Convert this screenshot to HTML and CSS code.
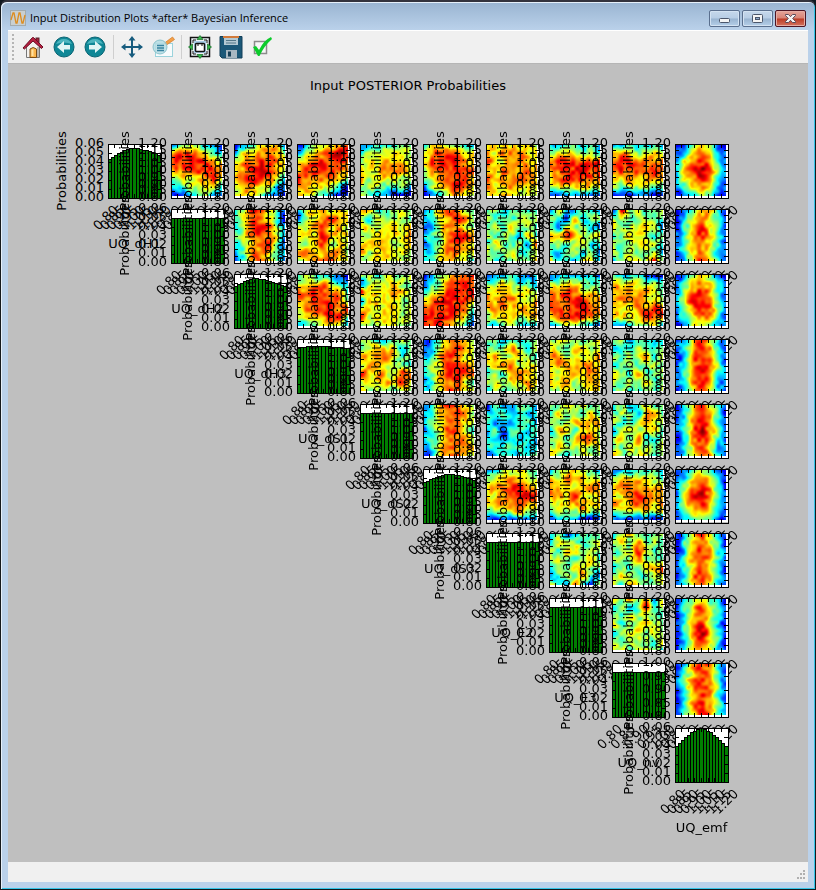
FILE: index.html
```html
<!DOCTYPE html>
<html lang="en">
<head>
    <meta charset="UTF-8">
    <meta name="viewport" content="width=device-width, initial-scale=1.0">
    <title>Input Distribution Plots *after* Bayesian Inference</title>
    <link rel="stylesheet" href="styles.css">
</head>
<body>
    <div class="window">
        <header class="titlebar">
            <svg class="app-icon" width="16" height="16" viewBox="0 0 16 16">
                <rect x="0.5" y="0.5" width="15" height="15" fill="#c9cfd0" stroke="#a3abae"/>
                <path d="M1 10 L3 3 L4 3 L6 13 L7 13 L9 3 L10 3 L12 13 L13 13 L15 5" fill="none" stroke="#dd8d20" stroke-width="1.3"/>
            </svg>
            <h1>Input Distribution Plots *after* Bayesian Inference</h1>
            <div class="window-buttons">
                <button class="win-button" aria-label="Minimize">
                    <svg width="29" height="15" viewBox="0 0 29 15">
                        <rect x="9.5" y="7.5" width="10" height="4" rx="1" fill="#f4f4f4" stroke="#4b566b"/>
                    </svg>
                </button>
                <button class="win-button" aria-label="Maximize">
                    <svg width="29" height="15" viewBox="0 0 29 15">
                        <rect x="9.5" y="3.5" width="10" height="8" rx="1" fill="#f4f4f4" stroke="#4b566b"/>
                        <rect x="12.5" y="6.5" width="4" height="2" fill="#8fa9cb" stroke="#4b566b"/>
                    </svg>
                </button>
                <button class="win-button close" aria-label="Close">
                    <svg width="29" height="15" viewBox="0 0 29 15">
                        <path d="M9.5 3.5 H12.5 L14.5 5.7 L16.5 3.5 H19.5 V4.5 L16.7 7.5 L19.5 10.5 V11.5 H16.5 L14.5 9.3 L12.5 11.5 H9.5 V10.5 L12.3 7.5 L9.5 4.5 Z" fill="#f6f4f4" stroke="#5a4a58"/>
                    </svg>
                </button>
            </div>
        </header>

        <main class="content">
            <div class="toolbar" role="toolbar">
                <span class="handle"></span>
                <button class="tool" aria-label="Home">
                    <svg width="24" height="24" viewBox="0 0 24 24">
                        <rect x="15" y="3" width="3" height="6" fill="#a31c37" stroke="#55222b"/>
                        <path d="M5.5 11 L12 4 L18.5 11 V22.5 H5.5 Z" fill="#f3f1ee" stroke="#777"/>
                        <path d="M17 12 V22" stroke="#b9b5ae" stroke-width="2"/>
                        <path d="M9 22.5 V14 Q12 11 15.5 14 V22.5 Z" fill="#fbb54c" stroke="#7a4c14"/>
                        <path d="M10.5 21 V15 Q11.5 14 12.5 14.5 V21 Z" fill="#fee0a0"/>
                        <path d="M2 13 L11.5 2.5 L12.5 2.5 L22 12 L20.5 13.5 L12 6 L3.5 14 Z" fill="#b61e40" stroke="#6b1025"/>
                    </svg>
                </button>
                <button class="tool" aria-label="Back">
                    <svg width="24" height="24" viewBox="0 0 24 24">
                        <circle cx="12" cy="12" r="10" fill="#0f8796" stroke="#0b6574"/>
                        <path d="M4 9 A9 9 0 0 1 20 9 Q12 6 4 9" fill="#4db5bf"/>
                        <path d="M5 12 L12 6 V10 H18 V14.5 H12 V18 Z" fill="#e0f5f5"/>
                    </svg>
                </button>
                <button class="tool" aria-label="Forward">
                    <svg width="24" height="24" viewBox="0 0 24 24">
                        <circle cx="12" cy="12" r="10" fill="#0f8796" stroke="#0b6574"/>
                        <path d="M4 9 A9 9 0 0 1 20 9 Q12 6 4 9" fill="#4db5bf"/>
                        <path d="M19 12 L12 6 V10 H6 V14.5 H12 V18 Z" fill="#e0f5f5"/>
                    </svg>
                </button>
                <span class="separator"></span>
                <button class="tool" aria-label="Pan">
                    <svg width="24" height="24" viewBox="0 0 24 24">
                        <path d="M12 3 V21 M3 12 H21" stroke="#175c7e" stroke-width="2"/>
                        <path d="M12 1 L15.5 5.5 H8.5 Z M12 23 L15.5 18.5 H8.5 Z M1 12 L5.5 8.5 V15.5 Z M23 12 L18.5 8.5 V15.5 Z" fill="#175c7e"/>
                    </svg>
                </button>
                <button class="tool" aria-label="Zoom to rectangle">
                    <svg width="24" height="24" viewBox="0 0 24 24">
                        <rect x="4.5" y="8.5" width="17" height="13" fill="#f7fbfc" stroke="#9bd3dc"/>
                        <path d="M13.5 8 L21.5 2 L23.5 4.5 L15.5 10 Z" fill="#f5a048" stroke="#cf7c2c" stroke-width="0.7"/>
                        <circle cx="9" cy="12" r="7" fill="#b5dce3" fill-opacity="0.85" stroke="#8ac3cd"/>
                        <path d="M6 10.5 H13 M6 13 H13 M6 15.5 H13" stroke="#3683a0" stroke-width="1.3"/>
                    </svg>
                </button>
                <span class="separator"></span>
                <button class="tool" aria-label="Configure subplots">
                    <svg width="24" height="24" viewBox="0 0 24 24">
                        <rect x="2.5" y="2.5" width="19" height="19" fill="#edf3f7" stroke="#111" stroke-width="1.5"/>
                        <path d="M5 5 H8 M16 5 H19 M5 19 H8 M16 19 H19 M5 5 V8 M19 5 V8 M5 16 V19 M19 16 V19" stroke="#111"/>
                        <rect x="6" y="6" width="12" height="12" fill="#a9cbe6"/>
                        <rect x="7.5" y="8.5" width="9" height="8" rx="1" fill="#fff" stroke="#111" stroke-width="1.5"/>
                        <path d="M10 8.5 V11 M14 8.5 V11" stroke="#111"/>
                        <path d="M12 0.5 L15 4.5 H9 Z M12 23.5 L15 19.5 H9 Z M0.5 12 L4.5 9 V15 Z M23.5 12 L19.5 9 V15 Z" fill="#37b34a" stroke="#126b22" stroke-width="0.7"/>
                    </svg>
                </button>
                <button class="tool" aria-label="Save">
                    <svg width="24" height="24" viewBox="0 0 24 24">
                        <path d="M1 1.5 H23 V23 H3 L1 21 Z" fill="#1b5878" stroke="#123f58"/>
                        <rect x="5" y="1" width="14" height="9" fill="#b3c9d3"/>
                        <rect x="4" y="1" width="16" height="2" fill="#d17a3a"/>
                        <path d="M7 5.5 H17 M7 8 H17" stroke="#537788"/>
                        <rect x="7" y="15" width="11" height="8" fill="#a9b8c2"/>
                        <rect x="9" y="16.5" width="3" height="5" fill="#163f57"/>
                    </svg>
                </button>
                <button class="tool" aria-label="Edit curves and axes">
                    <svg width="24" height="24" viewBox="0 0 24 24">
                        <rect x="4.5" y="6.5" width="12" height="12" fill="#f7f7f7" stroke="#8b8b8b" stroke-width="1.5"/>
                        <path d="M3 12 L6 11 L9 15 Q14 5 21 2 L22 4 Q14 11 9.5 21 L8 21 Z" fill="#0ccb2c"/>
                    </svg>
                </button>
            </div>

            <figure class="figure">
                <figcaption>Input POSTERIOR Probabilities</figcaption>
                <div class="plots" id="plots"></div>
            </figure>

            <footer class="statusbar">
                <svg width="10" height="10" viewBox="0 0 10 10">
                    <path d="M7 1h2M4 4h2M7 4h2M1 8h2M4 8h2M7 8h2" stroke="#b0b0b0" stroke-width="2"/>
                </svg>
            </footer>
        </main>
    </div>

    <script src="plots.js"></script>
</body>
</html>
```
FILE: styles.css
```css
:root {
    --frame-color: #bad1ea;
    --chrome-bg: #f0f0f0;
    --figure-bg: #bfbfbf;
}

* {
    box-sizing: border-box;
}

body {
    margin: 0;
    background-color: #101820;
    font-family: "Noto Sans", "Open Sans", sans-serif;
}

.window {
    display: flex;
    flex-direction: column;
    min-height: 100vh;
    padding: 0 6px 7px;
    border: 1px solid #15191d;
    border-top: 2px solid #33333d;
    border-radius: 7px 7px 0 0;
    background: linear-gradient(#99b4d1, var(--frame-color) 28px);
    box-shadow: inset 1px 1px 0 #e6f0fa, inset -1px -1px 0 #35c5e8;
}

.titlebar {
    display: flex;
    align-items: center;
    height: 28px;
    padding: 4px 0 0 3px;
}

.titlebar h1 {
    flex: 1;
    margin: 0 0 0 4px;
    font-family: "Open Sans", sans-serif;
    font-size: 11px;
    font-weight: 400;
    line-height: 16px;
    color: #000;
}

.window-buttons {
    display: flex;
    gap: 2px;
    margin-right: 3px;
}

.win-button {
    width: 31px;
    height: 17px;
    padding: 0;
    border: 1px solid #5a6f8e;
    border-radius: 2px;
    background: linear-gradient(#c6d8eb, #b7cde5 48%, #98b3d0 52%, #b5cfe9);
    box-shadow: inset 0 0 0 1px #d3e2f2;
}

.win-button svg {
    display: block;
}

.win-button.close {
    border-color: #4d1524;
    background: linear-gradient(#e5a499, #d88375 48%, #bb3a24 52%, #d4735f);
    box-shadow: inset 0 0 0 1px #e5aca3;
}

.content {
    display: flex;
    flex: 1;
    flex-direction: column;
    margin: 0 1px;
    background-color: var(--chrome-bg);
}

.toolbar {
    display: flex;
    align-items: center;
    height: 34px;
    padding-left: 4px;
    border-top: 1px solid #fff;
    border-bottom: 1px solid #b5b5b5;
}

.handle {
    width: 2px;
    height: 27px;
    margin-right: 3px;
    background: repeating-linear-gradient(#b5b5b5 0 2px, transparent 2px 4px);
}

.tool {
    display: flex;
    align-items: center;
    justify-content: center;
    width: 31px;
    height: 30px;
    padding: 0;
    border: none;
    background: none;
}

.separator {
    width: 1px;
    height: 24px;
    margin: 0 2px 0 3px;
    background-color: #cfcfcf;
}

.figure {
    display: flex;
    flex: 1;
    flex-direction: column;
    margin: 0;
    padding: 0 80px 80px 100px;
    background-color: var(--figure-bg);
    font-family: "DejaVu Sans", sans-serif;
    font-size: 13px;
    color: #000;
}

.figure figcaption {
    height: 80px;
    margin-left: -20px;
    padding-top: 13px;
    line-height: 18px;
    text-align: center;
}

.plots {
    display: grid;
    flex: 1;
    grid-template-columns: repeat(10, 1fr);
    grid-template-rows: repeat(10, minmax(40px, 1fr));
    gap: 11px 10px;
}

.plot {
    display: grid;
    grid-template: 100% / 100%;
    contain: size;
    background-color: #fff;
}

.plot canvas,
.plot svg {
    grid-area: 1 / 1;
    width: 100%;
    height: 100%;
}

.plot canvas {
    padding: 1px 2px 2px 1px;
}

.plot svg {
    overflow: visible;
}

.plot text {
    fill: #000;
}

.bar {
    fill: #007f00;
    stroke: #000;
    stroke-width: 1px;
    shape-rendering: crispEdges;
}

.axis {
    fill: none;
    stroke: #000;
    stroke-width: 1px;
    shape-rendering: crispEdges;
}

.statusbar {
    display: flex;
    align-items: flex-end;
    justify-content: flex-end;
    height: 20px;
    padding: 0 2px 2px;
}
```
FILE: plots.js
```js
const SVG_NS = 'http://www.w3.org/2000/svg';

const inputs = ['UQ_dH1', 'UQ_dH2', 'UQ_dH3', 'UQ_dS1', 'UQ_dS2', 'UQ_dS3', 'UQ_E2', 'UQ_E3', 'UQ_nv', 'UQ_emf'];

const fullRange = ['0.80', '0.85', '0.90', '0.95', '1.00', '1.05', '1.10', '1.15', '1.20'];
const shortRange = ['0.80', '0.85', '0.90', '0.95', '1.00'];
const probabilityTicks = ['0.00', '0.01', '0.02', '0.03', '0.04', '0.05', '0.06'];

// first bar, peak, last bar, position of the peak
const marginals = [
    [0.042, 0.055, 0.047, 0.5],
    [0.050, 0.050, 0.050, 0.5],
    [0.045, 0.055, 0.045, 0.4],
    [0.050, 0.052, 0.049, 0.4],
    [0.049, 0.050, 0.050, 0.5],
    [0.044, 0.054, 0.047, 0.5],
    [0.049, 0.050, 0.050, 0.5],
    [0.050, 0.050, 0.050, 0.5],
    [0.050, 0.050, 0.050, 0.5],
    [0.038, 0.059, 0.038, 0.5]
];

// joint densities, row by row, 0 = lowest and 9 = highest
const joints = [
    [
        '3455331 7887643 8888876 7788887 5666786 3455664 1134532',
        '1346663 3667775 5778876 6789875 6888763 5776632 5665321',
        '1355678 3567898 6788888 7888877 8777765 7766531 6654311',
        '2344454 4556665 5667665 6667776 7566655 5554453 5433111',
        '4665543 5788766 6888876 5788887 4678887 2567876 1246765',
        '6666665 7677766 8667776 7677777 8677776 7667666 6666555',
        '3344343 5666554 7888888 7788988 6788877 5666665 2223222',
        '3343343 6765665 7887777 7878787 6676776 5455544 1112211',
        '1256521 2367632 3678742 3789853 3678742 2467632 1235421'
    ],
    [
        '4588652 4687641 3588853 4678763 3567852 3477743 2477652',
        '3667565 2567876 5578675 6668766 5578566 7766775 5677866',
        '6644565 5365554 6656756 5566667 6666566 7566665 5566655',
        '3478754 3467875 2367765 3457887 2457876 3467766 3467654',
        '4535444 5454555 4546454 5455364 4644538 6456445 5445556',
        '2633543 5426355 4265532 7687556 5545634 4355352 6343663',
        '1856455 5545544 6556753 4566545 5456654 5464553 3556585',
        '1256742 1367642 1468642 2478742 2467642 2467632 1368742'
    ],
    [
        '4544321 5667543 7788774 7788875 6788878 5667885 3456653',
        '5545555 2556655 8666765 3666655 6666655 8566655 5556655',
        '1356788 2457888 4568888 6788887 7888874 8888763 8887542',
        '2334323 4565443 6676665 7677657 6776767 5666566 4355433',
        '2333332 5566545 7787665 7788877 8878877 6788876 3455431',
        '4334211 7666554 7776764 6778665 7667788 6666878 2345562',
        '1256521 2467642 2578742 3688742 2578852 2467742 1256432'
    ],
    [
        '5543454 4676635 7678645 5766554 8676587 5667686 6555465',
        '1357765 2367876 3478765 4568876 3578887 3467864 3468765',
        '5434345 4557545 6755654 5677566 4547765 5656676 4545565',
        '5565456 6546655 7756567 6776776 6567677 6675666 5565566',
        '4534434 3445544 5455745 4454554 6547455 5455645 4544545',
        '2368632 2468742 1378742 2478852 2478743 2478732 1368632'
    ],
    [
        '2478765 3467875 3567765 2468764 3457775 2467776 1367765',
        '1433443 3443433 4233443 3424434 3324343 4344433 2343344',
        '5465645 4655464 5556767 3664665 4546785 5655656 6545555',
        '3534645 4553674 5445755 3565564 5647445 5456545 7555645',
        '1468642 1368741 2478742 2479752 1378742 2468632 1367742'
    ],
    [
        '3355654 5667665 6778876 6678898 6777877 4556755 2121222',
        '3566543 6577655 7666777 7768666 5667766 4555654 2343111',
        '2334443 5666654 6777766 6678777 7678767 5565656 2212211',
        '1245421 2367631 2578741 2689742 2678742 2467632 1345421'
    ],
    [
        '4523544 3655456 5466555 5554564 4546655 2455742 5437425',
        '3665455 5647554 4558645 5557554 3545668 5654456 6475545',
        '1368632 1467641 1378742 2477742 2468641 1378742 2468632'
    ],
    [
        '6475736 4534845 5465554 6455655 4556565 5465546 5645554',
        '1356531 1468542 1367642 2478631 1479742 1368641 1467632'
    ],
    [
        '1378742 2468742 2578742 1478752 1368742 2478752 1458843'
    ]
];

function svgElement(name, attributes, parent) {
    const element = document.createElementNS(SVG_NS, name);
    Object.keys(attributes).forEach(key => element.setAttribute(key, attributes[key]));
    parent.appendChild(element);
    return element;
}

function addText(svg, text, attributes) {
    svgElement('text', attributes, svg).textContent = text;
}

function ticksFor(index) {
    return index === 8 ? shortRange : fullRange;
}

function jet(value) {
    const channel = center => {
        const level = 1.5 - Math.abs(4 * value - center);
        return Math.round(255 * Math.max(0, Math.min(1, level)));
    };
    return [channel(3), channel(2), channel(1)];
}

function cubic(a, b, c, d, t) {
    return b + 0.5 * t * (c - a + t * (2 * a - 5 * b + 4 * c - d + t * (3 * (b - c) + d - a)));
}

// u and v run from 0 to 1 over the grid
function sample(grid, u, v) {
    const last = grid.length - 1;
    const x = Math.min(u * last, last - 0.001);
    const y = Math.min(v * last, last - 0.001);
    const col = Math.floor(x);
    const row = Math.floor(y);
    const at = (r, c) => grid[Math.max(0, Math.min(last, r))][Math.max(0, Math.min(last, c))];
    const rows = [-1, 0, 1, 2].map(d =>
        cubic(at(row + d, col - 1), at(row + d, col), at(row + d, col + 1), at(row + d, col + 2), x - col));
    return cubic(rows[0], rows[1], rows[2], rows[3], y - row);
}

function noiseGrid(seed, size) {
    let state = seed * 7919 + 17;
    const grid = [];
    for (let r = 0; r < size; r++) {
        const line = [];
        for (let c = 0; c < size; c++) {
            state = (state * 1103515245 + 12345) % 2147483648;
            line.push(state / 2147483648 - 0.5);
        }
        grid.push(line);
    }
    return grid;
}

function drawHeatmap(canvas, data, seed, width, height) {
    const grid = data.split(' ').map(line => line.split('').map(Number));
    const noise = noiseGrid(seed, 14);
    canvas.width = width;
    canvas.height = height;
    const context = canvas.getContext('2d');
    const image = context.createImageData(width, height);
    for (let y = 0; y < height; y++) {
        for (let x = 0; x < width; x++) {
            const u = x / (width - 1);
            const v = y / (height - 1);
            const value = (sample(grid, u, v) + 1.6 * sample(noise, u, v) + 0.3) / 9.9;
            const [r, g, b] = jet(Math.max(0, Math.min(1, value)));
            image.data.set([r, g, b, 255], (y * width + x) * 4);
        }
    }
    context.putImageData(image, 0, 0);
}

function drawBars(svg, marginal, width, height) {
    const [first, peak, last, center] = marginal;
    const count = 17;
    for (let i = 0; i < count; i++) {
        const position = (i + 0.5) / count;
        const edge = position < center ? first : last;
        const reach = position < center ? center : 1 - center;
        const distance = (position - center) / reach;
        const barHeight = (peak - (peak - edge) * Math.pow(Math.abs(distance), 1.5)) / 0.06 * height;
        svgElement('rect', {
            class: 'bar',
            x: i * width / count,
            y: height - barHeight,
            width: width / count,
            height: barHeight
        }, svg);
    }
}

function drawAxes(svg, xTicks, yTicks, name, width, height) {
    let path = `M0 0H${width}V${height}H0Z`;
    xTicks.forEach((label, i) => {
        const x = i * width / (xTicks.length - 1);
        path += `M${x} 0v4M${x} ${height}v-4`;
        addText(svg, label, {
            x: x - 2, y: height + 24, 'text-anchor': 'middle', transform: `rotate(-45 ${x - 2} ${height + 20})`
        });
    });
    yTicks.forEach((label, i) => {
        const y = height - i * height / (yTicks.length - 1);
        path += `M0 ${y}h4M${width} ${y}h-4`;
        addText(svg, label, { x: -4, y: y + 3, 'text-anchor': 'end' });
    });
    svgElement('path', { class: 'axis', d: path }, svg);
    addText(svg, 'Probabilities', {
        x: -42, y: height / 2, 'text-anchor': 'middle', transform: `rotate(-90 -42 ${height / 2})`
    });
    addText(svg, name, { x: width / 2, y: height + 50, 'text-anchor': 'middle' });
}

function drawPlots() {
    const container = document.getElementById('plots');
    container.innerHTML = '';

    const plots = [];
    for (let row = 0; row < inputs.length; row++) {
        for (let col = row; col < inputs.length; col++) {
            const plot = document.createElement('div');
            plot.className = 'plot';
            plot.style.gridArea = `${row + 1} / ${col + 1}`;
            container.appendChild(plot);
            plots.push({ plot, row, col });
        }
    }

    plots.forEach(({ plot, row, col }) => {
        const width = plot.clientWidth;
        const height = plot.clientHeight;
        if (row !== col) {
            const canvas = document.createElement('canvas');
            plot.appendChild(canvas);
            drawHeatmap(canvas, joints[row][col - row - 1], row * 10 + col, width - 3, height - 3);
        }
        const svg = svgElement('svg', {}, plot);
        if (row === col) {
            drawBars(svg, marginals[row], width, height);
        }
        drawAxes(svg, ticksFor(col), row === col ? probabilityTicks : ticksFor(row), inputs[col], width, height);
    });
}

drawPlots();
window.addEventListener('resize', drawPlots);
```
